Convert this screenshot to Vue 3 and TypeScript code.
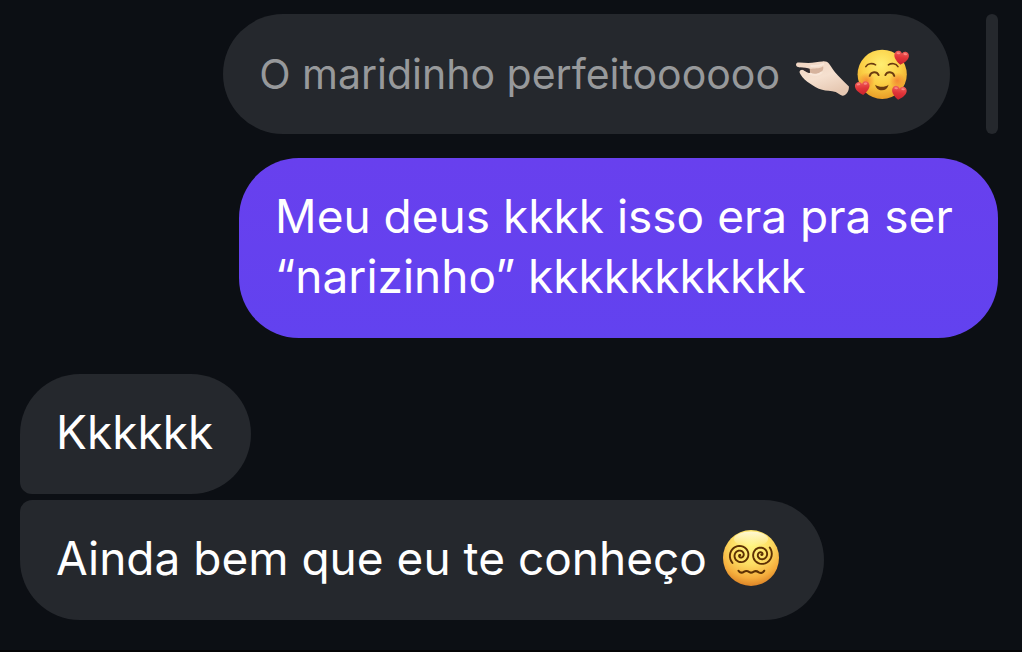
<script setup lang="ts">
/** Builds a clockwise spiral that runs from its outer tail into the centre. */
function spiral(cx: number, cy: number, radius: number, startDeg: number, turns: number): string {
  const steps = 72
  const points: string[] = []
  for (let i = 0; i <= steps; i++) {
    const t = i / steps
    const angle = ((startDeg + t * turns * 360) * Math.PI) / 180
    const r = radius * (1 - t)
    points.push(`${(cx + r * Math.cos(angle)).toFixed(2)} ${(cy + r * Math.sin(angle)).toFixed(2)}`)
  }
  return `M${points.join('L')}`
}

const leftEye = spiral(21.3, 29.2, 11, 135, 2.35)
const rightEye = spiral(42.3, 28.6, 11, -40, 2.35)

const hearts: string[] = ['translate(47.5 12.5) rotate(8)', 'translate(9.3 42.3) rotate(-6)', 'translate(45.3 47) rotate(8)']
</script>

<template>
  <main class="chat">
    <blockquote class="quote">
      <p class="bubble quoted">
        <span>O maridinho perfeitoooooo</span>
        <span class="pair">
          <svg class="emoji" viewBox="0 0 58 58" role="img" aria-label="🤏🏻">
            <defs>
              <linearGradient id="skin" x1="0" y1="0" x2="0.5" y2="1">
                <stop offset="0" stop-color="#f0d5c2" />
                <stop offset="0.55" stop-color="#f5e0cf" />
                <stop offset="1" stop-color="#e6c8b2" />
              </linearGradient>
            </defs>
            <path
              d="M2 19.2C2 17.6 3.4 17 5.2 17.2L14 17.7C19 17.4 24 16.3 28 16.1C31 15.9 33 16.5 34.3 18.2C37 21.7 39 26 43 29.7C46.6 33.5 50.3 37.3 54 40.7C54.2 45 51.8 49 47.7 50C45 49.5 43.5 47.3 41 46.3C36.5 44.7 31.5 45.2 27.7 44C23 42.6 19.5 40.4 16 38C12 35.6 8.3 32.3 6.5 29C4.8 26.7 5.3 24.5 8 24.4C10.5 24.3 12.3 27 15.5 26.8L15.3 24.3C11.5 22.5 6.5 22.6 3.2 21.3C2.3 20.9 2 20 2 19.2Z"
              fill="url(#skin)"
            />
            <path d="M5.5 22C9.5 22 13.5 22.2 16 23.6L16.8 27.4C14.5 28.7 11.4 26 9.2 24.6Z" fill="#312a2d" />
            <path d="M15.4 23.4C19.5 22.5 25 23.7 28.6 20.8C29.8 24.8 26.4 27.7 23 28.3C20.7 29 18 28.7 15.8 27.5Z" fill="#d6b39d" />
            <path d="M17 20.6C21.6 21 25.5 20.5 28.8 18.8M15.7 28.2C20 30.2 24.7 29.2 27 27" fill="none" stroke="#f8e6d8" stroke-width="2" stroke-linecap="round" />
          </svg>
          <svg class="emoji" viewBox="0 0 58 58" role="img" aria-label="🥰">
            <defs>
              <radialGradient id="sun" cx="0.48" cy="0.3" r="0.72">
                <stop offset="0" stop-color="#ffee72" />
                <stop offset="0.55" stop-color="#fbcf45" />
                <stop offset="1" stop-color="#e89a25" />
              </radialGradient>
              <radialGradient id="blush">
                <stop offset="0" stop-color="#f4762f" stop-opacity="0.75" />
                <stop offset="1" stop-color="#f4762f" stop-opacity="0" />
              </radialGradient>
              <linearGradient id="heart" x1="0" y1="0" x2="0" y2="1">
                <stop offset="0" stop-color="#f0605a" />
                <stop offset="0.5" stop-color="#df3338" />
                <stop offset="1" stop-color="#c8222d" />
              </linearGradient>
            </defs>
            <circle cx="28.7" cy="28.8" r="24.2" fill="url(#sun)" />
            <circle cx="13.5" cy="35" r="8" fill="url(#blush)" />
            <circle cx="43.5" cy="35" r="8" fill="url(#blush)" />
            <g fill="none" stroke="#6b3c10" stroke-width="1.6" stroke-linecap="round">
              <path d="M12.6 21.2C14.5 18.2 18.8 17.5 22.2 19.5" />
              <path d="M34.8 19.5C38 17.5 42.3 18.2 44.2 21.2" />
              <path d="M16.4 30.4C17.8 25.8 23.4 25.6 25.2 29.6" stroke-width="1.9" />
              <path d="M31.8 29.6C33.6 25.6 39.2 25.8 40.6 30.4" stroke-width="1.9" />
            </g>
            <path d="M21.8 39C26 41.7 31 41.7 35 39C34 42.5 31.7 44.6 28.4 44.6C25 44.6 22.6 42.5 21.8 39Z" fill="#6b3c10" />
            <g v-for="place in hearts" :key="place" :transform="place">
              <path d="M0 7C-3.2 5-7.2 1.5-7.2-2.2C-7.2-4.8-5.4-6.4-3.3-6.4C-1.6-6.4-.6-5.4 0-4.1C.6-5.4 1.6-6.4 3.3-6.4C5.4-6.4 7.2-4.8 7.2-2.2C7.2 1.5 3.2 5 0 7Z" fill="url(#heart)" />
              <ellipse cx="-3.5" cy="-4" rx="1.8" ry="1" fill="#ff9d96" fill-opacity="0.7" />
              <ellipse cx="3.4" cy="-4" rx="1.8" ry="1" fill="#ff9d96" fill-opacity="0.7" />
            </g>
          </svg>
        </span>
      </p>
    </blockquote>

    <p class="bubble sent">Meu deus kkkk isso era pra ser “narizinho” kkkkkkkkkkk</p>

    <section class="received">
      <p class="bubble first">Kkkkkk</p>
      <p class="bubble last">
        <span>Ainda bem que eu te conheço</span>
        <svg class="emoji large" viewBox="0 0 64 64" role="img" aria-label="😵‍💫">
          <defs>
            <radialGradient id="dizzy" cx="0.5" cy="0.27" r="0.75">
              <stop offset="0" stop-color="#fff580" />
              <stop offset="0.45" stop-color="#fddf65" />
              <stop offset="0.78" stop-color="#f5ae3d" />
              <stop offset="1" stop-color="#d97e24" />
            </radialGradient>
            <linearGradient id="shine" x1="0" y1="0" x2="0" y2="1">
              <stop offset="0" stop-color="#fffbe0" stop-opacity="0.9" />
              <stop offset="1" stop-color="#fffbe0" stop-opacity="0" />
            </linearGradient>
          </defs>
          <circle cx="32" cy="32" r="28" fill="url(#dizzy)" />
          <ellipse cx="32" cy="13" rx="17" ry="7.5" fill="url(#shine)" />
          <g fill="none" stroke="#5c3004" stroke-width="1.9" stroke-linecap="round" stroke-linejoin="round">
            <path :d="leftEye" />
            <path :d="rightEye" />
            <path d="M19.5 44.8C21 47.3 23.3 47 25.2 45.6C27.6 44.2 29 45.2 30.5 46.2C32 47.2 33.2 46.6 34.8 45.6C37 44.3 38.4 45.3 39.8 46.3C42 47.6 44.2 46.8 45.2 44.8" stroke-width="2.1" />
          </g>
        </svg>
      </p>
    </section>
  </main>
</template>

<style>
body {
  margin: 0;
  background: #0c0f14;
}
</style>

<style scoped>
.chat {
  box-sizing: border-box;
  min-height: 100vh;
  display: flex;
  flex-direction: column;
  padding: 14px 24px 30px 20px;
  border-bottom: 2px solid #050507;
  background: #0c0f14;
  color: #fff;
  font-family: Inter, "Liberation Sans", sans-serif;
  font-size: 46px;
  line-height: 60px;
}

.bubble {
  box-sizing: border-box;
  margin: 0;
  padding: 28px 36px 32px;
  border-radius: 60px;
  background: #25282d;
}

.quote {
  align-self: flex-end;
  display: flex;
  margin: 0 0 24px;
}

.quote::after {
  content: "";
  width: 12px;
  margin-left: 36px;
  border-radius: 6px;
  background: #25282d;
}

.quoted {
  display: flex;
  align-items: center;
  gap: 14px;
  padding: 30px 36px;
  color: #97999b;
  font-size: 41px;
}

.pair {
  display: flex;
  margin-right: 2px;
}

.emoji {
  flex: none;
  width: 59px;
  height: 59px;
}

.large {
  width: 64px;
  height: 64px;
  margin: -2px 5px -2px 0;
}

.sent {
  align-self: flex-end;
  max-width: 77.6%;
  background: linear-gradient(#6840ee, #6242ef);
}

.received {
  display: flex;
  flex-direction: column;
  align-items: flex-start;
  gap: 6px;
  margin-top: 36px;
}

.first {
  padding-right: 38px;
  border-bottom-left-radius: 12px;
}

.last {
  display: flex;
  align-items: center;
  gap: 12px;
  border-top-left-radius: 12px;
}
</style>
